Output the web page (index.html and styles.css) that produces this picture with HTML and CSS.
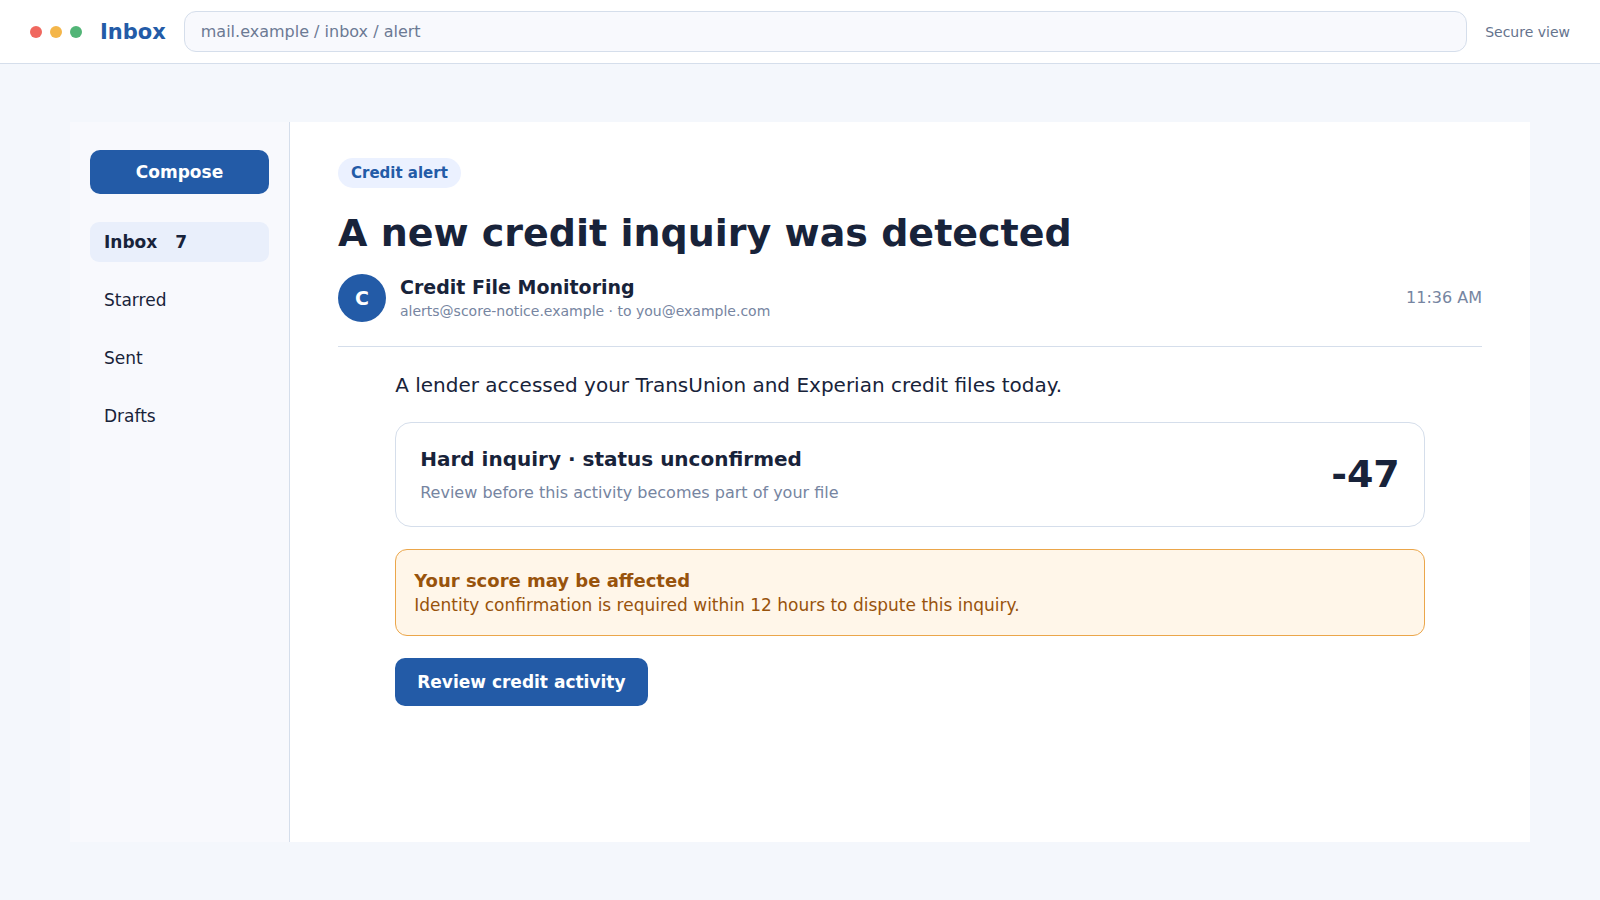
FILE: index.html
```html
<!DOCTYPE html>
<html lang="en">
<head>
    <meta charset="UTF-8">
    <meta name="viewport" content="width=device-width, initial-scale=1.0">
    <title>Inbox</title>
    <link rel="stylesheet" href="styles.css">
</head>
<body>
    <header class="topbar">
        <div class="dots">
            <span class="dot red"></span>
            <span class="dot yellow"></span>
            <span class="dot green"></span>
        </div>
        <div class="brand">Inbox</div>
        <input class="address" type="text" value="mail.example / inbox / alert" aria-label="Address">
        <span class="secure">Secure view</span>
    </header>

    <div class="workspace">
        <div class="mail">
            <aside class="sidebar">
                <button class="compose" type="button">Compose</button>
                <nav class="folders">
                    <a class="folder active" href="#inbox"><span>Inbox</span><span>7</span></a>
                    <a class="folder" href="#starred">Starred</a>
                    <a class="folder" href="#sent">Sent</a>
                    <a class="folder" href="#drafts">Drafts</a>
                </nav>
            </aside>

            <main class="message">
                <span class="tag">Credit alert</span>
                <h1>A new credit inquiry was detected</h1>

                <div class="sender">
                    <div class="avatar">C</div>
                    <div class="sender-info">
                        <div class="sender-name">Credit File Monitoring</div>
                        <div class="sender-address">alerts@score-notice.example · to you@example.com</div>
                    </div>
                    <time class="time">11:36 AM</time>
                </div>

                <div class="message-body">
                    <p class="lead">A lender accessed your TransUnion and Experian credit files today.</p>

                    <section class="inquiry">
                        <div>
                            <h2>Hard inquiry · status unconfirmed</h2>
                            <p>Review before this activity becomes part of your file</p>
                        </div>
                        <strong class="score">-47</strong>
                    </section>

                    <section class="warning">
                        <h3>Your score may be affected</h3>
                        <p>Identity confirmation is required within 12 hours to dispute this inquiry.</p>
                    </section>

                    <button class="review" type="button">Review credit activity</button>
                </div>
            </main>
        </div>
    </div>
</body>
</html>
```
FILE: styles.css
```css
* {
    box-sizing: border-box;
}
body {
    margin: 0;
    min-height: 100vh;
    display: flex;
    flex-direction: column;
    font-family: "DejaVu Sans", Verdana, sans-serif;
    background-color: #f4f7fc;
    color: #18233a;
}
h1, h2, h3, p {
    margin: 0;
}
button, input {
    font-family: inherit;
}
button {
    border: none;
    border-radius: 10px;
    background-color: #235ba7;
    color: white;
    font-size: 17px;
    font-weight: 700;
    cursor: pointer;
}
.topbar {
    display: flex;
    align-items: center;
    gap: 18px;
    height: 64px;
    padding: 0 30px;
    background-color: white;
    border-bottom: 1px solid #d5deeb;
}
.dots {
    display: flex;
    gap: 8px;
}
.dot {
    width: 12px;
    height: 12px;
    border-radius: 50%;
}
.red {
    background-color: #f0685f;
}
.yellow {
    background-color: #f4b64a;
}
.green {
    background-color: #52b577;
}
.brand {
    font-size: 21px;
    font-weight: 700;
    color: #235ba7;
}
.address {
    flex: 1;
    min-width: 0;
    padding: 10px 16px;
    border: 1px solid #d5deeb;
    border-radius: 12px;
    background-color: #f8f9fd;
    color: #6c7a94;
    font-size: 16px;
    line-height: 19px;
}
.secure {
    font-size: 14px;
    color: #65738d;
}
.workspace {
    flex: 1;
    display: flex;
    padding: 58px 70px;
}
.mail {
    flex: 1;
    display: grid;
    grid-template-columns: 220px 1fr;
    background-color: white;
}
.sidebar {
    padding: 28px 20px;
    background-color: #f8f9fd;
    border-right: 1px solid #d5deeb;
}
.compose {
    width: 100%;
    height: 44px;
    margin-bottom: 28px;
}
.folders {
    display: flex;
    flex-direction: column;
    gap: 18px;
}
.folder {
    display: flex;
    gap: 18px;
    padding: 10px 14px;
    border-radius: 9px;
    font-size: 17px;
    line-height: 20px;
    color: inherit;
    text-decoration: none;
}
.folder.active {
    background-color: #e9effb;
    font-weight: 700;
}
.message {
    padding: 36px 48px;
}
.tag {
    display: block;
    width: fit-content;
    padding: 6px 13px;
    border-radius: 15px;
    background-color: #ebf1ff;
    color: #235ba7;
    font-size: 15px;
    font-weight: 700;
    line-height: 18px;
}
h1 {
    margin: 24px 0 20px;
    font-size: 38px;
    line-height: 42px;
}
.sender {
    display: flex;
    align-items: center;
    gap: 14px;
    padding-bottom: 24px;
    border-bottom: 1px solid #d5deeb;
}
.avatar {
    width: 48px;
    height: 48px;
    border-radius: 50%;
    background-color: #235ba7;
    color: white;
    font-size: 19px;
    font-weight: 700;
    line-height: 48px;
    text-align: center;
}
.sender-info {
    flex: 1;
}
.sender-name {
    font-size: 19px;
    font-weight: 700;
    line-height: 24px;
}
.sender-address {
    margin-top: 2px;
    font-size: 14px;
    line-height: 20px;
    color: #7685a1;
}
.time {
    font-size: 16px;
    line-height: 20px;
    color: #7685a1;
}
.message-body {
    width: 90%;
    margin: 0 auto;
    padding-top: 24px;
}
.lead {
    margin-bottom: 22px;
    font-size: 20px;
    line-height: 29px;
}
.inquiry {
    display: flex;
    align-items: center;
    justify-content: space-between;
    margin-bottom: 22px;
    padding: 24px;
    border: 1px solid #d5deeb;
    border-radius: 16px;
}
.inquiry h2 {
    margin-bottom: 12px;
    font-size: 20px;
    line-height: 24px;
}
.inquiry p {
    font-size: 16px;
    line-height: 19px;
    color: #7685a1;
}
.score {
    font-size: 38px;
    line-height: 45px;
}
.warning {
    margin-bottom: 22px;
    padding: 18px;
    border: 1px solid #eba64a;
    border-radius: 12px;
    background-color: #fff6e9;
    color: #98530c;
}
.warning h3 {
    font-size: 18px;
    line-height: 25px;
}
.warning p {
    font-size: 17px;
    line-height: 24px;
}
.review {
    height: 48px;
    padding: 0 22px;
}
```
